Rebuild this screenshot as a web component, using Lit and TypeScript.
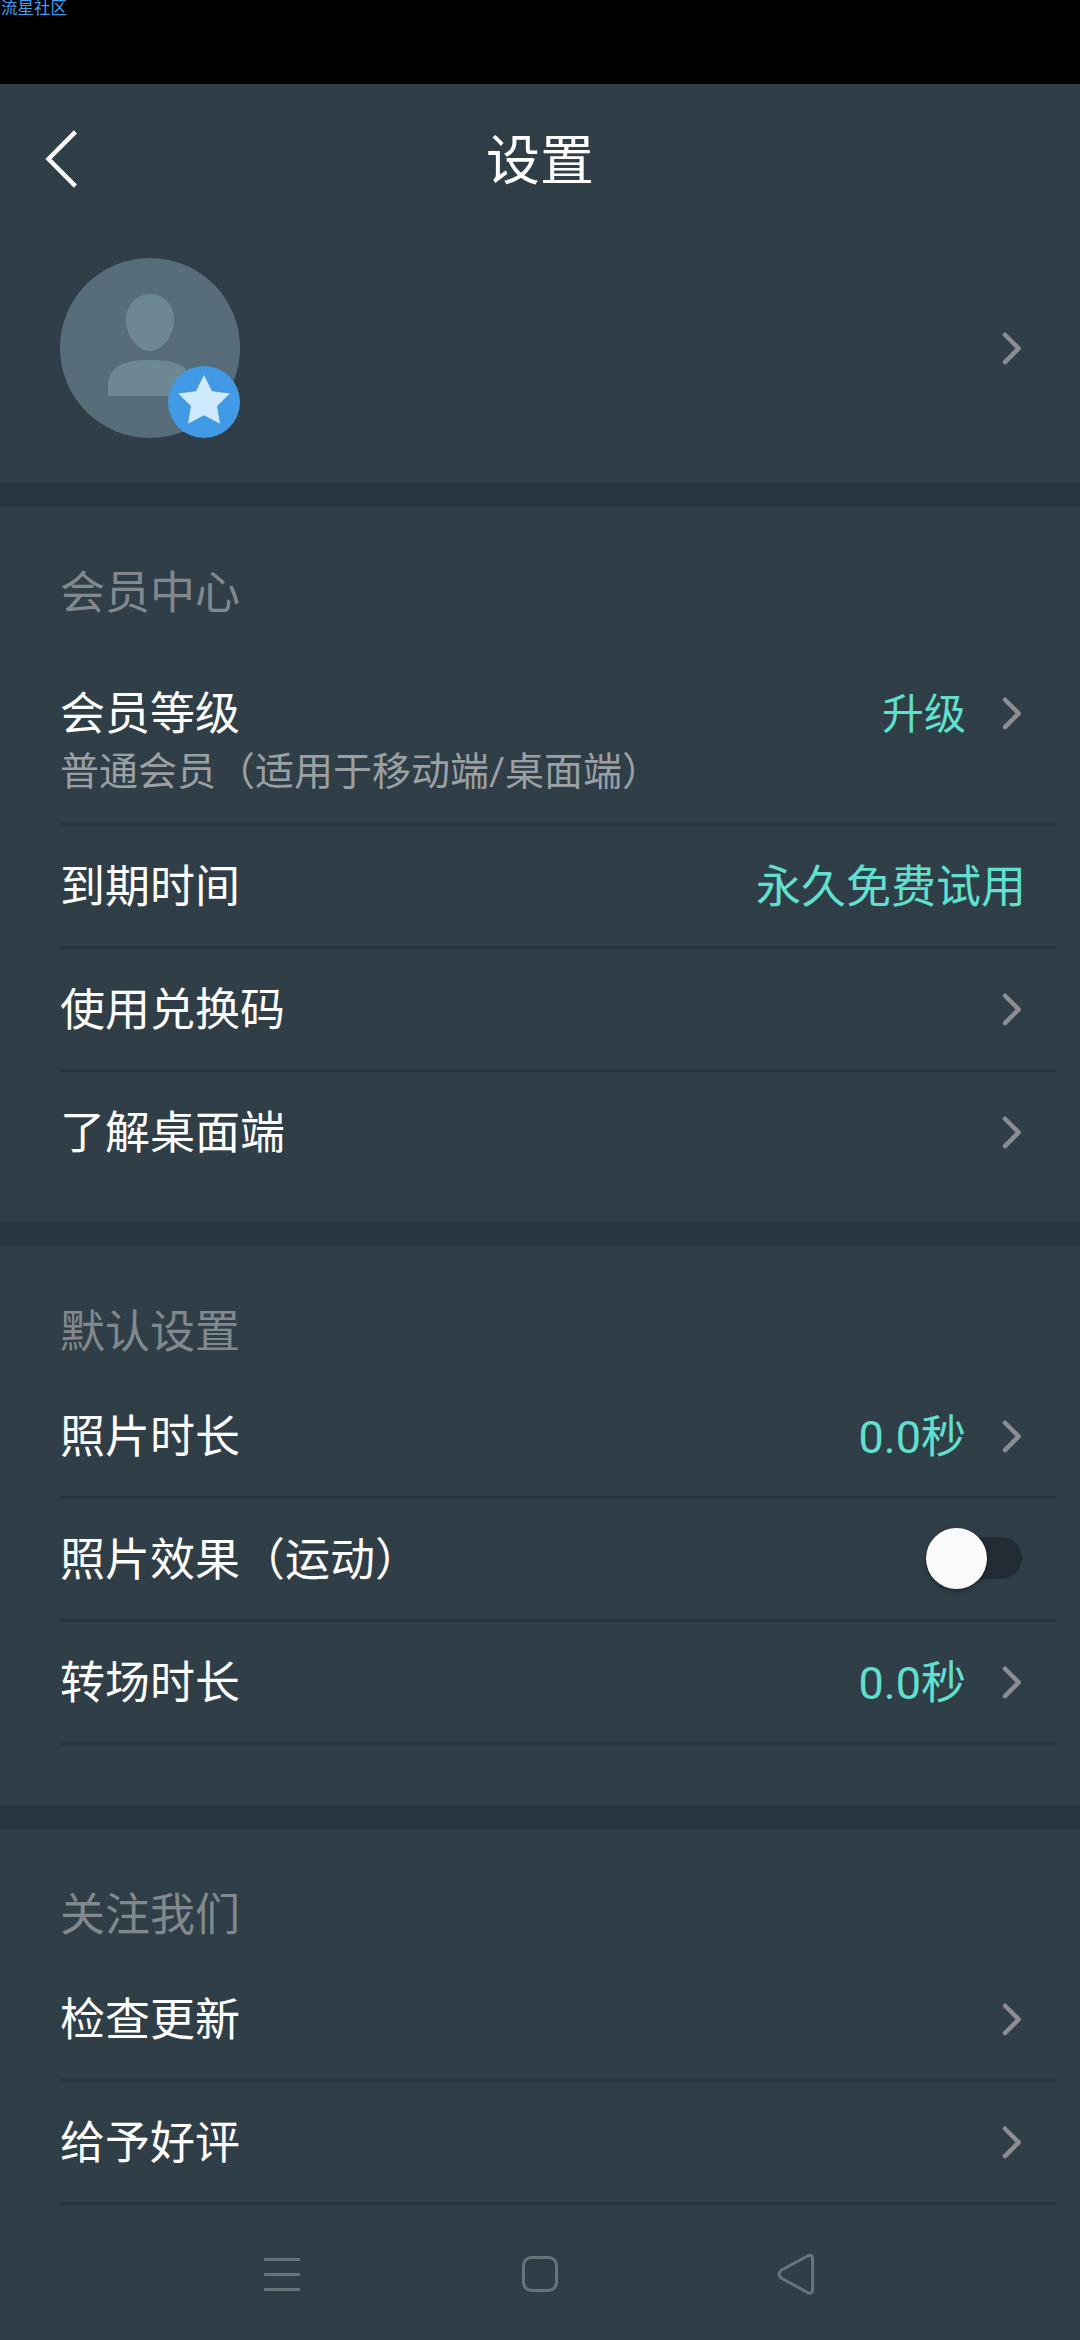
import { LitElement, html, css, svg, nothing } from "lit";
import { customElement, property } from "lit/decorators.js";

interface Row {
  label: string;
  note?: string;
  value?: string;
  compact?: boolean;
  toggle?: boolean;
  chevron?: boolean;
  last?: boolean;
}

interface Section {
  title: string;
  rows: Row[];
}

const SECTIONS: Section[] = [
  {
    title: "会员中心",
    rows: [
      { label: "会员等级", note: "普通会员（适用于移动端/桌面端）", value: "升级", compact: true, chevron: true },
      { label: "到期时间", value: "永久免费试用" },
      { label: "使用兑换码", chevron: true },
      { label: "了解桌面端", chevron: true, last: true },
    ],
  },
  {
    title: "默认设置",
    rows: [
      { label: "照片时长", value: "0.0秒", chevron: true },
      { label: "照片效果（运动）", toggle: true },
      { label: "转场时长", value: "0.0秒", chevron: true },
    ],
  },
  {
    title: "关注我们",
    rows: [
      { label: "检查更新", chevron: true },
      { label: "给予好评", chevron: true },
    ],
  },
];

const chevron = () => svg`<svg class="chevron" width="24" height="36" viewBox="0 0 24 36">
  <path d="M6 4.7 L19.700 18.400 L6 32.100" fill="none" stroke="#8e8d93" stroke-width="4.4"
    stroke-linecap="round" stroke-linejoin="round"/>
</svg>`;

@customElement("setting-row")
export class SettingRow extends LitElement {
  @property({ attribute: false }) row!: Row;

  static styles = css`
    :host {
      display: block;
      padding: 0 24px 0 60px;
    }
    .row {
      display: flex;
      align-items: flex-start;
      justify-content: space-between;
      height: 120px;
      padding-right: 32px;
      border-bottom: 3px solid #2a363f;
    }
    .row.last {
      border-bottom: none;
    }
    .row.tall {
      height: 170px;
      padding-top: 16px;
    }
    .texts {
      display: flex;
      flex-direction: column;
    }
    .label {
      font-size: 45px;
      line-height: 124px;
      color: #fff;
      white-space: nowrap;
    }
    .note {
      margin-top: -32px;
      font-size: 39px;
      line-height: 55px;
      color: #9ba0a4;
      white-space: nowrap;
    }
    .side {
      display: flex;
      align-items: center;
      height: 120px;
    }
    .value {
      padding-top: 4px;
      font-size: 45px;
      line-height: 120px;
      color: #61e0d0;
      white-space: nowrap;
      margin-right: -2px;
    }
    .value.compact {
      padding-top: 3px;
      font-size: 42px;
    }
    .value.spaced {
      margin-right: 32px;
    }
    .chevron {
      display: block;
      margin-right: 1px;
      margin-left: 1px;
    }
    .track {
      box-sizing: border-box;
      display: flex;
      align-items: center;
      width: 87px;
      height: 42px;
      margin: 0 2px 2px 0;
      border-radius: 21px;
      background: #232c34;
    }
    .thumb {
      flex: none;
      width: 61px;
      height: 61px;
      margin-left: -9px;
      border-radius: 50%;
      background: #fafafa;
      box-shadow: 0 3px 4px rgba(0, 0, 0, 0.28), 0 0 3px rgba(0, 0, 0, 0.15);
    }
  `;

  render() {
    const r = this.row;
    return html`<div class="row ${r.note ? "tall" : ""} ${r.last ? "last" : ""}">
      <div class="texts">
        <span class="label">${r.label}</span>
        ${r.note ? html`<span class="note">${r.note}</span>` : nothing}
      </div>
      <div class="side">
        ${r.value
          ? html`<span class="value ${r.compact ? "compact" : ""} ${r.chevron ? "spaced" : ""}">${r.value}</span>`
          : nothing}
        ${r.toggle ? html`<div class="track"><div class="thumb"></div></div>` : nothing}
        ${r.chevron ? chevron() : nothing}
      </div>
    </div>`;
  }
}

@customElement("app-root")
export class AppRoot extends LitElement {
  static styles = css`
    :host {
      display: flex;
      flex-direction: column;
      width: 1080px;
      height: 2340px;
      overflow: hidden;
      background: #303e47;
      font-family: Roboto, "Noto Sans CJK SC", sans-serif;
    }
    .status {
      flex: none;
      height: 84px;
      background: #000;
      color: #429ff2;
      font-size: 16.5px;
      line-height: 18px;
      padding-left: 1px;
      box-sizing: border-box;
    }
    .header {
      flex: none;
      display: grid;
      grid-template-columns: 120px 1fr 120px;
      align-items: center;
      height: 150px;
    }
    .back {
      display: block;
      margin-left: 42px;
    }
    .title {
      padding-top: 5px;
      text-align: center;
      font-size: 54px;
      line-height: 80px;
      color: #fff;
    }
    .profile {
      flex: none;
      box-sizing: border-box;
      display: flex;
      align-items: center;
      justify-content: space-between;
      height: 249px;
      padding: 0 57px 21px 60px;
    }
    .avatar,
    .chevron {
      display: block;
    }
    .section {
      flex: none;
      border-top: 24px solid #2a363f;
      padding-bottom: 60px;
    }
    .section.first {
      padding-bottom: 30px;
    }
    .section-title {
      box-sizing: border-box;
      height: 130px;
      padding: 55px 0 0 60px;
      font-size: 45px;
      line-height: 64px;
      color: #81898e;
    }
    .nav {
      flex: none;
      margin-top: -60px;
      height: 135px;
      display: flex;
      align-items: center;
      justify-content: center;
      gap: 210px;
      padding-top: 3px;
      box-sizing: border-box;
    }
    .nav svg {
      display: block;
    }
  `;

  render() {
    return html`
      <div class="status">流星社区</div>
      <div class="header">
        <svg class="back" width="38" height="60" viewBox="0 0 38 60">
          <path d="M33.4 2.9 L6.5 30 L33.4 57.1" fill="none" stroke="#fff" stroke-width="4.4" />
        </svg>
        <span class="title">设置</span>
      </div>
      <div class="profile">
        <svg class="avatar" width="180" height="180" viewBox="0 0 180 180">
          <circle cx="90" cy="90" r="90" fill="#586d7a" />
          <path d="M90 36 C103.5 36 114 47 114 62 C114 78 102 93 90 93 C78 93 66 78 66 62 C66 47 76.500 36 90 36 Z" fill="#6e8794" />
          <path d="M48 138 V128 C48 107 65 102 90 102 C115 102 132 107 132 128 V138 Z" fill="#6e8794" />
          <circle cx="144" cy="144" r="36" fill="#4299e5" />
          <path d="M144 117 L152 133.200 L169.800 135.600 L157 148 L160 165.700 L144 157.300 L128 165.700 L131 148 L118.200 135.600 L136 133.200 Z" fill="#d0eaff" />
        </svg>
        ${chevron()}
      </div>
      ${SECTIONS.map(
        (s, i) => html`<div class="section ${i === 0 ? "first" : ""}">
          <div class="section-title">${s.title}</div>
          ${s.rows.map((r) => html`<setting-row .row=${r}></setting-row>`)}
        </div>`
      )}
      <div class="nav">
        <svg width="48" height="48" viewBox="0 0 48 48" fill="#68737a">
          <rect x="6" y="8" width="36" height="3" rx="0.500" />
          <rect x="6" y="23" width="36" height="3" rx="0.500" />
          <rect x="6" y="38" width="36" height="3" rx="0.500" />
        </svg>
        <svg width="48" height="48" viewBox="0 0 48 48" fill="none" stroke="#68737a" stroke-width="3">
          <rect x="7.500" y="7.500" width="33" height="33" rx="8" />
        </svg>
        <svg width="48" height="48" viewBox="0 0 48 48" fill="none" stroke="#68737a" stroke-width="3" stroke-linejoin="round">
          <path d="M33 6.300 Q38.600 3.500 38.600 9 V39.500 Q38.600 45 33 42.300 L7.200 28 Q2.800 24.300 7.200 20.300 Z" />
        </svg>
      </div>
    `;
  }
}
